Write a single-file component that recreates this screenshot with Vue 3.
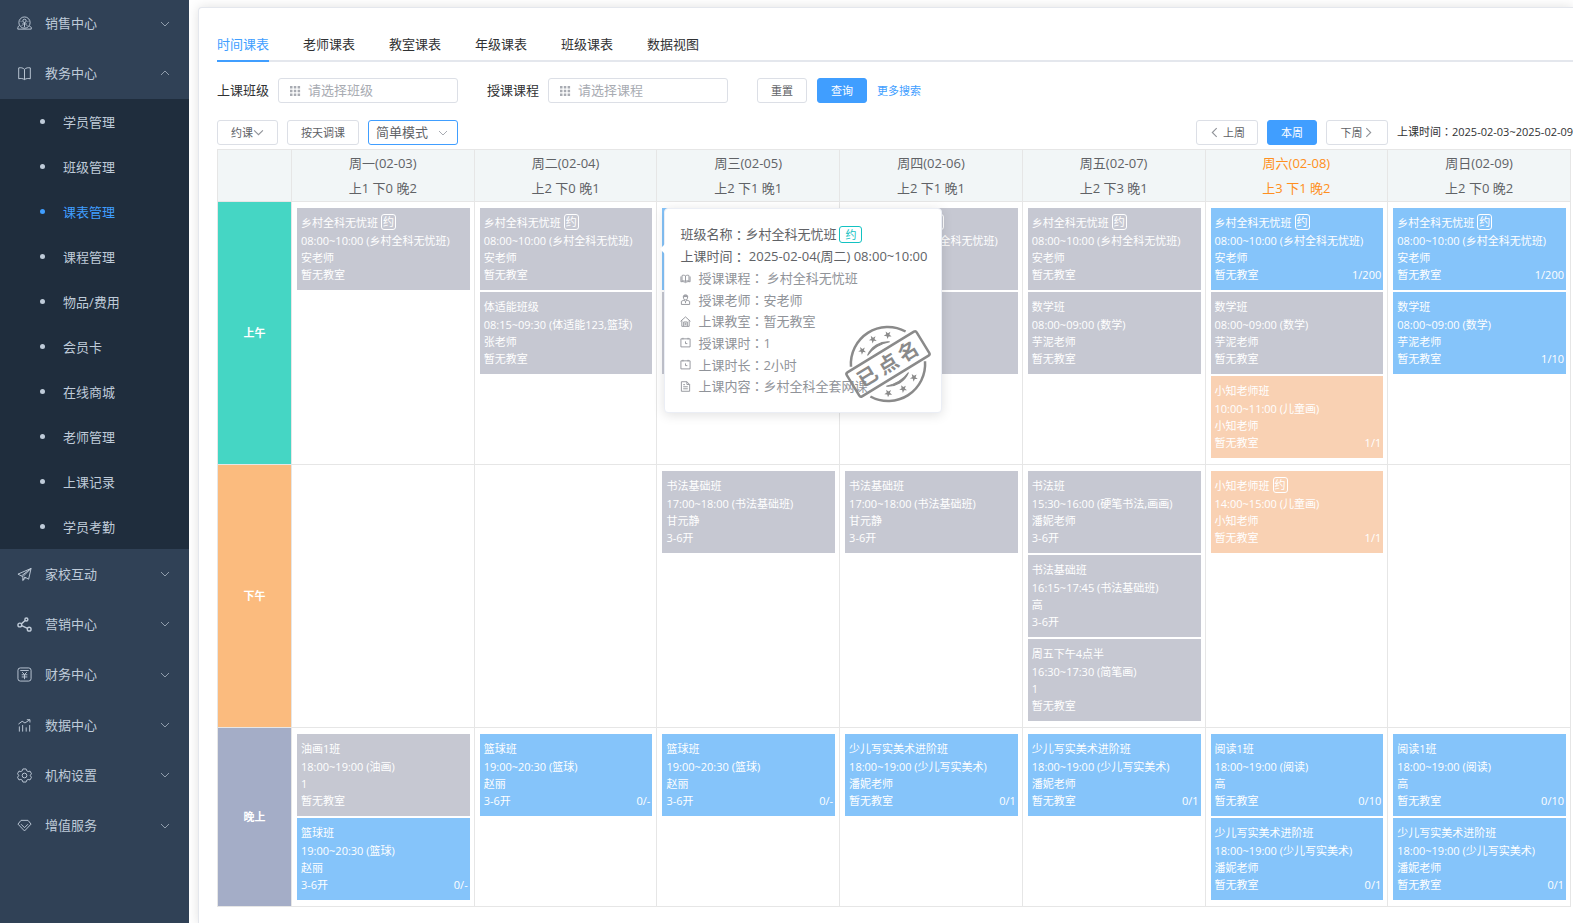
<script setup>
import { ref } from 'vue'

const submenu = ['学员管理', '班级管理', '课表管理', '课程管理', '物品/费用', '会员卡', '在线商城', '老师管理', '上课记录', '学员考勤']
const lowerMenu = [
  { icon: 'plane', label: '家校互动' },
  { icon: 'share', label: '营销中心' },
  { icon: 'money', label: '财务中心' },
  { icon: 'chart', label: '数据中心' },
  { icon: 'gear', label: '机构设置' },
  { icon: 'gem', label: '增值服务' }
]
const tabs = ['时间课表', '老师课表', '教室课表', '年级课表', '班级课表', '数据视图']
const activeTab = ref('时间课表')
const className = ref('')
const courseName = ref('')

const days = [
  { name: '周一(02-03)', stat: '上1 下0 晚2' },
  { name: '周二(02-04)', stat: '上2 下0 晚1' },
  { name: '周三(02-05)', stat: '上2 下1 晚1' },
  { name: '周四(02-06)', stat: '上2 下1 晚1' },
  { name: '周五(02-07)', stat: '上2 下3 晚1' },
  { name: '周六(02-08)', stat: '上3 下1 晚2', today: true },
  { name: '周日(02-09)', stat: '上2 下0 晚2' }
]

const lesson = (tone, name, time, teacher, room, count = '', bookable = false) =>
  ({ tone, name, time, teacher, room, count, bookable })
const village = (tone, count) =>
  lesson(tone, '乡村全科无忧班', '08:00~10:00 (乡村全科无忧班)', '安老师', '暂无教室', count, true)
const maths = (tone, count) => lesson(tone, '数学班', '08:00~09:00 (数学)', '芋泥老师', '暂无教室', count)
const ball = () => lesson('blue', '篮球班', '19:00~20:30 (篮球)', '赵丽', '3-6开', '0/-')
const art = () => lesson('blue', '少儿写实美术进阶班', '18:00~19:00 (少儿写实美术)', '潘妮老师', '暂无教室', '0/1')
const reading = () => lesson('blue', '阅读1班', '18:00~19:00 (阅读)', '高', '暂无教室', '0/10')
const brush = () => lesson('grey', '书法基础班', '17:00~18:00 (书法基础班)', '甘元静', '3-6开')
const blank = (tone) => lesson(tone, '', '', '', '')

const periods = [
  {
    name: '上午', tone: 'am', cells: [
      [village('grey')],
      [village('grey'), lesson('grey', '体适能班级', '08:15~09:30 (体适能123,篮球)', '张老师', '暂无教室')],
      [{ ...blank('blue'), open: true }, blank('grey')],
      [village('grey'), blank('grey')],
      [village('grey'), maths('grey')],
      [village('blue', '1/200'), maths('grey'), lesson('orange', '小知老师班', '10:00~11:00 (儿童画)', '小知老师', '暂无教室', '1/1')],
      [village('blue', '1/200'), maths('blue', '1/10')]
    ]
  },
  {
    name: '下午', tone: 'pm', cells: [
      [], [], [brush()], [brush()],
      [
        lesson('grey', '书法班', '15:30~16:00 (硬笔书法,画画)', '潘妮老师', '3-6开'),
        lesson('grey', '书法基础班', '16:15~17:45 (书法基础班)', '高', '3-6开'),
        lesson('grey', '周五下午4点半', '16:30~17:30 (简笔画)', '1', '暂无教室')
      ],
      [lesson('orange', '小知老师班', '14:00~15:00 (儿童画)', '小知老师', '暂无教室', '1/1', true)],
      []
    ]
  },
  {
    name: '晚上', tone: 'night', cells: [
      [lesson('grey', '油画1班', '18:00~19:00 (油画)', '1', '暂无教室'), ball()],
      [ball()], [ball()], [art()], [art()],
      [reading(), art()], [reading(), art()]
    ]
  }
]

const details = [
  { icon: 'course', label: '授课课程', value: ' 乡村全科无忧班' },
  { icon: 'teacher', label: '授课老师', value: '安老师' },
  { icon: 'room', label: '上课教室', value: '暂无教室' },
  { icon: 'clock', label: '授课课时', value: '1' },
  { icon: 'clock', label: '上课时长', value: '2小时' },
  { icon: 'doc', label: '上课内容', value: '乡村全科全套网课' }
]
const stars = [[-15, -25], [0, -29], [15, -25], [-15, 25], [0, 29], [15, 25]]
</script>

<template>
  <div class="layout">
    <nav class="sidebar">
      <button class="group first" type="button">
        <svg class="gicon" viewBox="0 0 16 16"><circle cx="8" cy="7" r="6" /><circle cx="8" cy="5.200" r="1.800" /><path d="M8 7v5M5.500 8.500h5M3.800 5.500l1 .6M12.200 5.500l-1 .6M5 10.500l.8-.8M11 10.500l-.8-.8M2.600 9.800C1.400 10.800.8 12 .8 14h14.400v-2c-.6-.6-1.200-.8-2-1" /></svg>
        <span>销售中心</span>
        <svg class="chev" viewBox="0 0 10 10"><path d="M1 3l4 4 4-4" /></svg>
      </button>
      <button class="group second" type="button">
        <svg class="gicon" viewBox="0 0 16 16"><path d="M8 3.600C6.400 1.800 4 1.600 1.800 2v11.600c2-.5 4.400-.4 6.200.9 1.800-1.300 4.200-1.400 6.200-.9V2C12 1.600 9.600 1.800 8 3.600zM8 3.600v10.900" /></svg>
        <span>教务中心</span>
        <svg class="chev" viewBox="0 0 10 10"><path d="M1 7l4-4 4 4" /></svg>
      </button>
      <ul class="submenu">
        <li v-for="item in submenu" :key="item">
          <a href="#" :class="{ active: item === '课表管理' }">{{ item }}</a>
        </li>
      </ul>
      <div class="lower">
        <button v-for="item in lowerMenu" :key="item.label" class="group" type="button">
          <svg class="gicon" :class="item.icon" viewBox="0 0 16 16">
            <path v-if="item.icon === 'plane'" d="M15 1.500 1 7.600l3.700 1.900L15 1.500l-2.600 11.500-4.200-2.300M15 1.500 6.200 10.300v4l2-3.600M4.700 9.500l1.500.8M6.200 14.300l3.200-2.900" />
            <template v-else-if="item.icon === 'share'">
              <circle cx="3" cy="8.500" r="2" /><circle cx="10" cy="2.600" r="1.600" /><circle cx="13" cy="13" r="2" /><path d="M4.600 7.300 8.800 3.800M5 9.200l6.200 2.900" />
            </template>
            <template v-else-if="item.icon === 'money'">
              <rect x="1" y="1" width="14" height="14" rx="2.500" /><path d="M3.500 3.700h9M5.500 5.500 8 8l2.500-2.500M8 8v5M5 8.300h6M5 10.600h6" />
            </template>
            <path v-else-if="item.icon === 'chart'" d="M2.500 9v5.500M6 7.500v7M9.800 10v4.500M13.500 7.500v7M1.500 6.500l4-3 3 1.800 5-3.300M10.500 1.800h3.300v3" />
            <template v-else-if="item.icon === 'gear'">
              <circle cx="8" cy="8" r="2.500" /><path d="M6.300 1h3.400l.6 1.900 1.600.9 2-.5 1.600 2.900L14.200 7.600v.8l1.300 1.400-1.600 2.900-2-.5-1.600.9-.6 1.900H6.300l-.6-1.900-1.600-.9-2 .5L.5 9.800l1.300-1.400v-.8L.5 6.200l1.600-2.900 2 .5 1.600-.9z" />
            </template>
            <path v-else d="M4.300 2.500h7.400L15 6.500 8 13.800 1 6.500zM4.300 6.600 8 10.300l3.700-3.700" />
          </svg>
          <span>{{ item.label }}</span>
          <svg class="chev" viewBox="0 0 10 10"><path d="M1 3l4 4 4-4" /></svg>
        </button>
      </div>
    </nav>

    <main class="panel">
      <div class="tabs" role="tablist">
        <button v-for="tab in tabs" :key="tab" type="button" role="tab" :aria-selected="tab === activeTab" :class="{ active: tab === activeTab }" @click="activeTab = tab">{{ tab }}</button>
      </div>

      <form class="filters" @submit.prevent>
        <label for="class-filter">上课班级</label>
        <div class="field">
          <svg viewBox="0 0 12 12"><path d="M1 1h2.500v2.500H1zM4.800 1h2.500v2.500H4.800zM8.600 1h2.500v2.500H8.600zM1 4.800h2.500v2.500H1zM4.800 4.800h2.500v2.500H4.800zM8.600 4.800h2.500v2.500H8.600zM1 8.600h2.500v2.500H1zM4.800 8.600h2.500v2.500H4.800zM8.600 8.600h2.500v2.500H8.600z" /></svg>
          <input id="class-filter" v-model="className" type="text" placeholder="请选择班级">
        </div>
        <label for="course-filter">授课课程</label>
        <div class="field">
          <svg viewBox="0 0 12 12"><path d="M1 1h2.500v2.500H1zM4.800 1h2.500v2.500H4.800zM8.600 1h2.500v2.500H8.600zM1 4.800h2.500v2.500H1zM4.800 4.800h2.500v2.500H4.800zM8.600 4.800h2.500v2.500H8.600zM1 8.600h2.500v2.500H1zM4.800 8.600h2.500v2.500H4.800zM8.600 8.600h2.500v2.500H8.600z" /></svg>
          <input id="course-filter" v-model="courseName" type="text" placeholder="请选择课程">
        </div>
        <div class="actions">
          <button class="btn" type="button">重置</button>
          <button class="btn primary" type="submit">查询</button>
          <a href="#">更多搜索</a>
        </div>
      </form>

      <div class="toolbar">
        <button class="btn" type="button">约课<svg class="mini" viewBox="0 0 10 10"><path d="M1 3l4 4 4-4" /></svg></button>
        <button class="btn" type="button">按天调课</button>
        <div class="mode">
          <select aria-label="显示模式"><option>简单模式</option></select>
          <svg class="chev" viewBox="0 0 10 10"><path d="M1 3l4 4 4-4" /></svg>
        </div>
        <div class="week">
          <button class="btn arrow" type="button"><svg class="mini" viewBox="0 0 10 10"><path d="M7 1 3 5l4 4" /></svg>&nbsp;上周</button>
          <button class="btn primary" type="button">本周</button>
          <button class="btn arrow" type="button">下周<svg class="mini" viewBox="0 0 10 10"><path d="M3 1l4 4-4 4" /></svg></button>
          <span class="range">上课时间<i class="colon">：</i>2025-02-03~2025-02-09</span>
        </div>
      </div>

      <table class="schedule">
        <thead>
          <tr>
            <th class="corner"></th>
            <th v-for="day in days" :key="day.name" scope="col" :class="{ today: day.today }">
              <div>{{ day.name }}</div>
              <div>{{ day.stat }}</div>
            </th>
          </tr>
        </thead>
        <tbody>
          <tr v-for="period in periods" :key="period.name">
            <th scope="row" class="period" :class="period.tone">{{ period.name }}</th>
            <td v-for="(cell, i) in period.cells" :key="i">
              <div class="stack">
                <div v-for="(item, j) in cell" :key="j" class="card" :class="item.tone">
                  <template v-if="item.name">
                    <div class="title">{{ item.name }}<span v-if="item.bookable" class="tag">约</span></div>
                    <div>{{ item.time }}</div>
                    <div>{{ item.teacher }}</div>
                    <div class="foot"><span>{{ item.room }}</span><span>{{ item.count }}</span></div>
                  </template>
                  <div v-if="item.open" class="popover" role="tooltip">
                    <p>班级名称<i class="colon">：</i>乡村全科无忧班<span class="tag">约</span></p>
                    <p>上课时间<i class="colon">：</i>&nbsp;2025-02-04(周二) 08:00~10:00</p>
                    <p v-for="row in details" :key="row.label" class="detail">
                      <svg class="dicon" viewBox="0 0 12 12">
                        <path v-if="row.icon === 'course'" d="M6 3.200C4.800 2.200 3.200 2.200 2.200 2.800v6c1.200-.5 2.700-.4 3.800.5 1.100-.9 2.600-1 3.800-.5v-6C8.800 2.200 7.200 2.200 6 3.200zM6 3.200v6M1 3.800v5.800c1.700-.5 3.300-.2 5 .9 1.700-1.100 3.300-1.400 5-.9V3.800" />
                        <template v-else-if="row.icon === 'teacher'">
                          <path d="M3.600 3C3.800.2 8.200.2 8.400 3L8 5c-.5 1.800-3.500 1.800-4 0zM3.800 2.800h4.400M3.900 1.900h4.200M4.600 6.500 1.500 8v3.400h9V8L7.400 6.500M4.600 6.700 6 8.500l1.400-1.800M6 8.500V10" />
                        </template>
                        <path v-else-if="row.icon === 'room'" d="M.6 5.800 6 1l5.400 4.800M2 4.800v6.500h8V4.800M4 11V6.500h4V11M5 8h2M5 9.500h2" />
                        <path v-else-if="row.icon === 'clock'" d="M1 2h10v8.800H1zM3.200.9v1.700M8.800.9v1.700M6 4.800v2.400h2" />
                        <path v-else d="M1.500.8h6l3 3v7.400h-9zM7.500.8v3h3M3.500 4h2M3.500 6.300h5M3.500 8.500h5" />
                      </svg>
                      <span>{{ row.label }}<i class="colon">：</i>{{ row.value }}</span>
                    </p>
                    <svg class="stamp" viewBox="-50 -50 100 100">
                      <g transform="rotate(-31.500)">
                        <path class="ring" d="M-33-17A37 37 0 0 1 32-18.500M33 17A37 37 0 0 1-32 18.500" />
                        <path class="thin" d="M-13-18A22 22 0 0 1 13-18Q0-23-13-18zM13 18A22 22 0 0 1-13 18Q0 23 13 18z" />
                        <rect class="ring" x="-41" y="-14" width="82" height="28" rx="2" />
                        <path v-for="(s, k) in stars" :key="k" class="star" :transform="`translate(${s[0]} ${s[1]})`" d="M0-4 1-1.300 3.900-1.200 1.600.6 2.400 3.400 0 1.800-2.400 3.400-1.600.6-3.900-1.200-1-1.300z" />
                        <text x="-24" y="7">已</text><text x="0" y="7">点</text><text x="24" y="7">名</text>
                      </g>
                    </svg>
                  </div>
                </div>
              </div>
            </td>
          </tr>
        </tbody>
      </table>
    </main>
  </div>
</template>

<style>
body { margin: 0; background: #fff; overflow: hidden; }
</style>

<style scoped>
.layout {
  display: flex;
  min-height: 100vh;
  font-family: "Open Sans", "Noto Sans CJK SC", sans-serif;
  font-size: 13px;
  color: #303133;
}
.layout *, .layout *::before { box-sizing: border-box; }
button, input, select { font-family: inherit; }
svg { fill: none; stroke: currentColor; flex: none; }
a { text-decoration: none; }
.colon { font-style: normal; font-family: "Noto Sans CJK TC", sans-serif; }

.sidebar { flex: none; width: 189px; background: #304156; color: #bfcbd9; }
.group {
  display: flex;
  align-items: center;
  width: 100%;
  height: 50px;
  padding: 0 19px 0 17px;
  border: 0;
  background: none;
  color: inherit;
  font-size: 13px;
}
.group.first { height: 49px; padding-bottom: 2px; }
.group.second { padding-bottom: 2px; }
.group span { flex: 1; margin-left: 13px; padding-bottom: 2px; text-align: left; }
.gicon { width: 15px; height: 15px; stroke-width: 1; }
.gicon.share { stroke-width: 1.5; }
.chev { width: 10px; height: 10px; color: #909dac; }
.lower { display: grid; grid-auto-rows: 1fr; height: 302px; }
.lower .group { height: auto; }
.submenu { margin: 0; padding: 0; list-style: none; background: #1f2d3d; }
.submenu a {
  display: flex;
  align-items: center;
  height: 45px;
  padding-left: 40px;
  color: #bfcbd9;
}
.submenu a::before {
  content: "";
  width: 5px;
  height: 5px;
  margin-right: 18px;
  border-radius: 50%;
  background: currentColor;
}
.submenu a.active { color: #409eff; }

.panel {
  flex: 1;
  min-width: 0;
  margin: 7px 0 0 9px;
  padding: 20px 0 17px 18px;
  border: 1px solid #e4e7ed;
  border-width: 1px 0 0 1px;
  border-radius: 4px 0 0 0;
  background: #fff;
  box-shadow: 0 0 12px rgba(0, 0, 0, .12);
}
.tabs {
  display: flex;
  gap: 34px;
  height: 34px;
  border-bottom: 2px solid #e4e7ed;
}
.tabs button {
  height: 34px;
  padding: 0 0 2px;
  border: 0;
  border-bottom: 2px solid transparent;
  background: none;
  color: #303133;
  font-size: 13px;
}
.tabs button.active { color: #409eff; border-color: #409eff; }

.filters { display: flex; align-items: center; margin-top: 16px; height: 25px; }
.filters label { width: 61px; padding-bottom: 3px; }
.filters .field + label { margin-left: 29px; }
.field {
  display: flex;
  align-items: center;
  width: 180px;
  height: 25px;
  padding-left: 10px;
  border: 1px solid #dcdfe6;
  border-radius: 3px;
}
.field svg { width: 12px; height: 12px; fill: #a8abb2; stroke: none; }
.field input {
  width: 140px;
  margin-left: 7px;
  padding: 0 0 2px;
  border: 0;
  outline: 0;
  background: none;
  font-size: 13px;
}
.field input::placeholder { color: #a8abb2; }
.actions { display: flex; align-items: center; gap: 10px; margin-left: 29px; }
.actions a { padding-bottom: 2px; color: #409eff; font-size: 11px; }
.btn {
  display: flex;
  align-items: center;
  justify-content: center;
  height: 25px;
  padding: 0 13px 2px;
  border: 1px solid #dcdfe6;
  border-radius: 3px;
  background: #fff;
  color: #606266;
  font-size: 11px;
}
.btn.primary { border-color: #409eff; background: #409eff; color: #fff; }
.btn.arrow { width: 62px; padding: 0 0 2px; }
.mini { width: 11px; height: 11px; margin-top: 2px; color: #909399; }

.toolbar { display: flex; gap: 9px; margin-top: 17px; white-space: nowrap; }
.mode { position: relative; width: 90px; height: 25px; }
.mode select {
  width: 100%;
  height: 100%;
  padding: 0 7px 2px;
  border: 1px solid #409eff;
  border-radius: 3px;
  appearance: none;
  background: #fff;
  color: #606266;
  font-size: 13px;
}
.mode .chev { position: absolute; top: 8px; right: 10px; color: #a8abb2; pointer-events: none; }
.week { display: flex; align-items: center; gap: 9px; margin-left: auto; }
.range { width: 176px; padding-bottom: 3px; font-size: 11px; }

.schedule {
  width: calc(100% - 2px);
  margin-top: 4px;
  table-layout: fixed;
  border-collapse: separate;
  border-spacing: 0;
  border: 1px solid #e6e6e6;
  border-width: 1px 0 0 1px;
}
.schedule th, .schedule td { border: 1px solid #e6e6e6; border-width: 0 1px 1px 0; }
.schedule th { padding: 1px 0 0; color: #606266; font-weight: 400; line-height: 25px; }
.schedule thead th { background: #f2f6f7; }
.schedule .corner { width: 74px; }
.schedule .today { color: #ff8f20; }
.schedule .period { padding-bottom: 2px; color: #fff; font-size: 11px; font-weight: 700; }
.am { background: #45d6c4; }
.pm { background: #fbbb7e; }
.night { background: #a4adc7; }
.schedule td { padding: 6px 4px 6px 5px; vertical-align: top; }
.stack { display: grid; gap: 2px; }
.card {
  position: relative;
  min-width: 0;
  height: 82px;
  padding: 6px 2px 0 4px;
  color: #fff;
  font-size: 11px;
  line-height: 17px;
  white-space: nowrap;
}
.grey { background: #c6c8d2; }
.blue { background: #85c4fa; }
.orange { background: #f9d1b3; }
.title { display: flex; align-items: center; height: 18px; padding-bottom: 2px; }
.tag {
  height: 16px;
  margin-left: 3px;
  padding: 0 1px;
  border: 1px solid currentColor;
  border-radius: 3px;
  font-size: 11px;
  line-height: 14px;
}
.foot { display: flex; justify-content: space-between; }

.popover {
  position: absolute;
  z-index: 5;
  top: 0;
  left: 2px;
  display: grid;
  grid-auto-rows: 1fr;
  width: 278px;
  height: 205px;
  padding: 15px;
  border: 1px solid #ebeef5;
  border-radius: 4px;
  background: #fff;
  box-shadow: 0 2px 12px rgba(0, 0, 0, .12);
  color: #606266;
  font-size: 13px;
}
.popover::before {
  content: "";
  position: absolute;
  top: 35px;
  left: -5px;
  border: 5px solid transparent;
  border-left: 0;
  border-right-color: #fff;
}
.popover p { display: flex; align-items: center; margin: 0; }
.popover .tag { height: 17px; padding: 0 5px; color: #13c2c2; line-height: 15px; }
.popover .detail { color: #909399; white-space: pre; }
.dicon { width: 11px; height: 11px; margin-right: 7px; }
.stamp { position: absolute; top: 105px; left: 173px; width: 100px; height: 100px; color: #8a8a8a; }
.ring { stroke-width: 2.5; }
.thin { stroke-width: 1; fill: currentColor; }
.star { fill: currentColor; stroke: none; }
.stamp text { fill: currentColor; stroke: none; font-size: 20px; font-weight: 700; text-anchor: middle; }
</style>
